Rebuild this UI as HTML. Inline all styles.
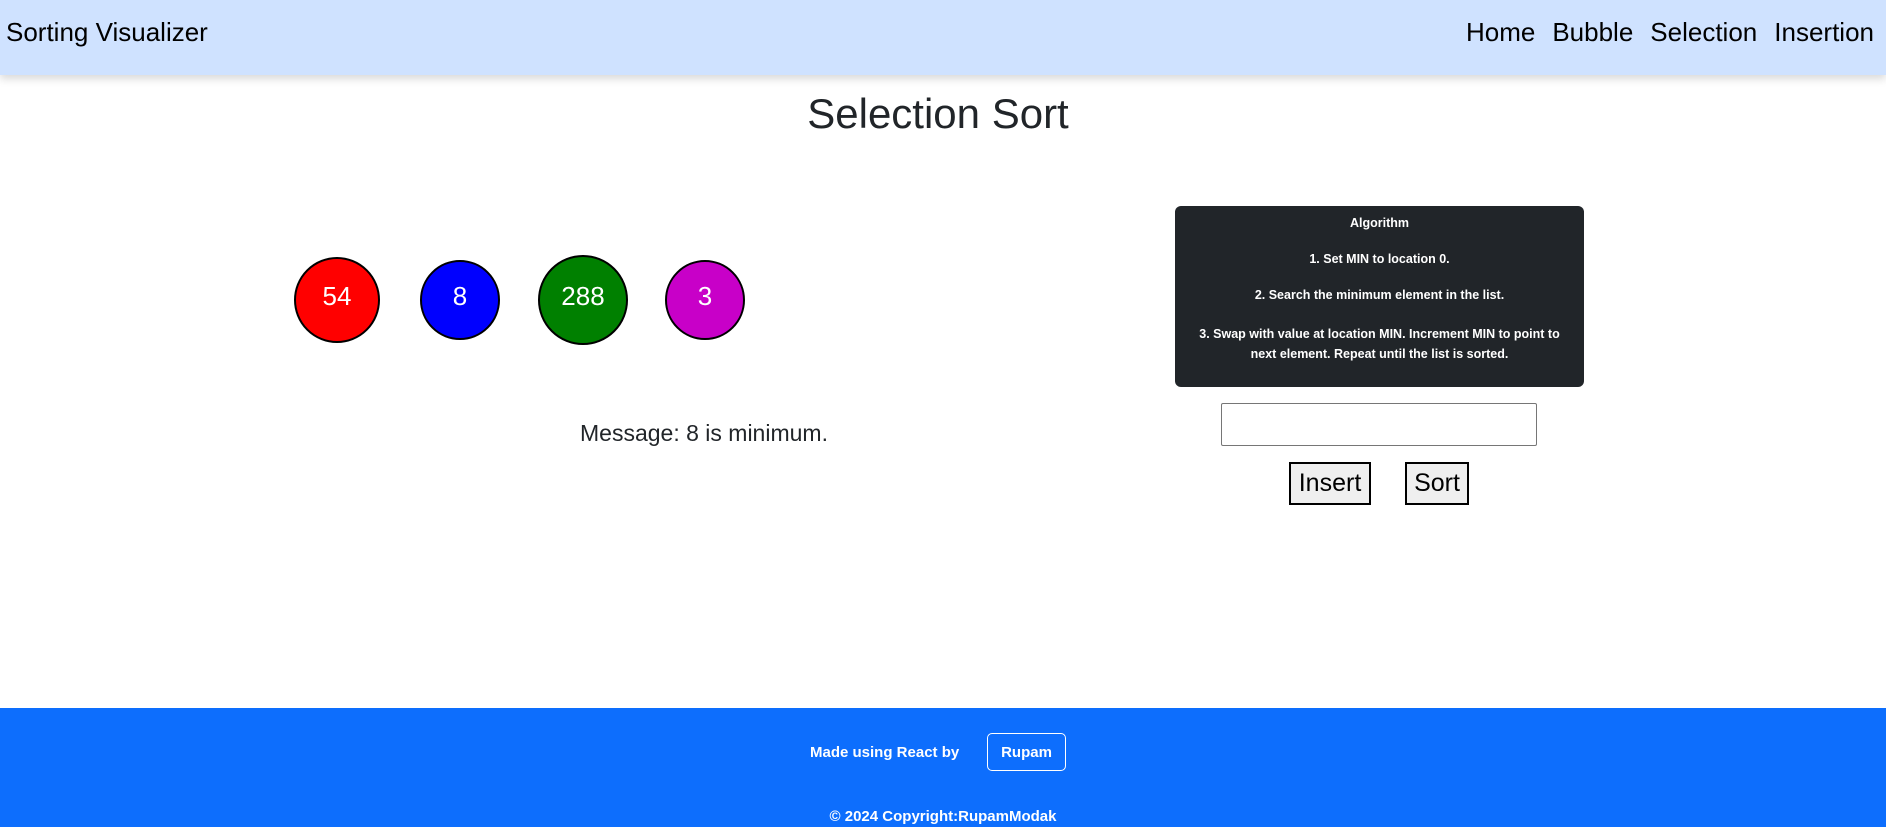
<!DOCTYPE html>
<html><head><meta charset="utf-8"><style>
*{margin:0;padding:0;box-sizing:border-box}
body{width:1886px;height:827px;position:relative;overflow:hidden;background:#fff;font-family:"Liberation Sans",sans-serif;color:#212529}
.nav{position:absolute;left:0;top:0;width:1886px;height:75px;background:#cfe2ff;box-shadow:0 4px 8px rgba(0,0,0,.15)}
.brand{position:absolute;left:6px;top:17px;font-size:26px;color:#000}
.links{position:absolute;right:12px;top:17px;font-size:26px;color:#000}
.links span{margin-left:17px}
.t{position:absolute;left:0;width:1876px;text-align:center;top:90px;font-size:42px;color:#212529}
.c{position:absolute;border:2px solid #000;border-radius:50%;color:#fff;font-size:26px;display:flex;align-items:center;justify-content:center;padding-bottom:8px}
.msg{position:absolute;left:580px;top:420px;font-size:23px;color:#212529}
.algo{position:absolute;left:1175px;top:206px;width:409px;height:181px;background:#212529;border-radius:6px;color:#fff;font-size:12.5px;font-weight:bold;text-align:center}
.algo div{position:absolute;left:0;width:100%}
.inp{position:absolute;left:1221px;top:403px;width:316px;height:43px;border:1px solid #767676;border-radius:2px}
.btn{position:absolute;top:462px;height:43px;background:#efefef;border:2px solid #000;font-size:25px;color:#000;display:flex;align-items:center;justify-content:center}
.foot{position:absolute;left:0;top:708px;width:1886px;height:119px;background:#0d6efd;color:#fff}
</style></head><body>
<div class="nav"><div class="brand">Sorting Visualizer</div>
<div class="links"><span>Home</span><span>Bubble</span><span>Selection</span><span>Insertion</span></div></div>
<div class="t">Selection Sort</div>
<div class="c" style="left:294px;top:257px;width:86px;height:86px;background:#f00">54</div>
<div class="c" style="left:420px;top:260px;width:80px;height:80px;background:#00f">8</div>
<div class="c" style="left:538px;top:255px;width:90px;height:90px;background:#008000">288</div>
<div class="c" style="left:665px;top:260px;width:80px;height:80px;background:#c800c8">3</div>
<div class="msg">Message: 8 is minimum.</div>
<div class="algo">
<div style="top:10px">Algorithm</div>
<div style="top:46px">1. Set MIN to location 0.</div>
<div style="top:82px">2. Search the minimum element in the list.</div>
<div style="top:118px;line-height:20px">3. Swap with value at location MIN. Increment MIN to point to<br>next element. Repeat until the list is sorted.</div>
</div>
<div class="inp"></div>
<div class="btn" style="left:1289px;width:82px">Insert</div>
<div class="btn" style="left:1405px;width:64px">Sort</div>
<div class="foot">
<div style="position:absolute;left:810px;top:36px;font-size:15px;font-weight:bold">Made using React by</div>
<div style="position:absolute;left:987px;top:25px;width:79px;height:38px;border:1px solid #fff;border-radius:5px;font-size:15px;font-weight:bold;display:flex;align-items:center;justify-content:center">Rupam</div>
<div style="position:absolute;left:0;width:1886px;text-align:center;top:100px;font-size:15px;font-weight:bold">© 2024 Copyright:RupamModak</div>
</div>
</body></html>
